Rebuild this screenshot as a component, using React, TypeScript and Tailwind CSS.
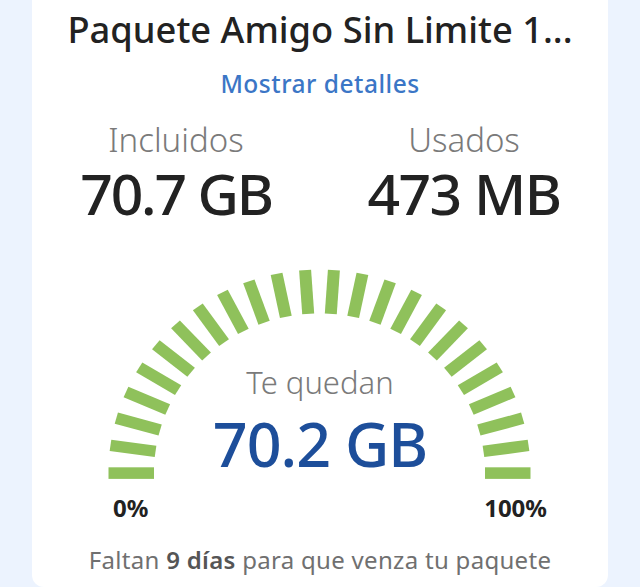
import React from "react";

const BARS = Array.from({ length: 24 }, (_, i) => (i * 180) / 23);

function Gauge() {
  return (
    <svg
      className="absolute inset-0 h-full w-full"
      viewBox="0 0 576 273.3"
      aria-hidden="true"
    >
      <g transform="translate(287.5 251.1) scale(1 0.9645)">
        {BARS.map((deg, i) => (
          <rect
            key={i}
            x={-211}
            y={-6}
            width={45.5}
            height={12}
            fill="#8fc15b"
            transform={`rotate(${deg})`}
          />
        ))}
      </g>
    </svg>
  );
}

export default function App() {
  return (
    <div
      className="flex min-h-screen justify-center bg-[#ecf3fe]"
      style={{ fontFamily: "'Noto Sans', 'Open Sans', sans-serif" }}
    >
      <div className="flex h-[587px] w-[576px] flex-col items-center rounded-b-[12px] bg-white">
        <div className="pt-[10.5px] text-[36.3px] font-medium leading-none text-[#222222]">
          Paquete Amigo Sin Limite 1...
        </div>
        <div className="mt-[25.5px] text-[24.5px] font-medium leading-none tracking-[0.5px] text-[#3b76c6]">
          Mostrar detalles
        </div>
        <div className="mt-[25.8px] grid w-full grid-cols-2">
          <div className="flex flex-col items-center">
            <div className="text-[33px] font-light leading-none text-[#7a7a7a]">
              Incluidos
            </div>
            <div className="mt-[9.7px] text-[57px] font-medium leading-none tracking-[-2.2px] text-[#222222]">
              70.7 GB
            </div>
          </div>
          <div className="flex flex-col items-center">
            <div className="text-[33px] font-light leading-none text-[#7a7a7a]">
              Usados
            </div>
            <div className="mt-[9.7px] text-[57px] font-medium leading-none tracking-[-1.5px] text-[#222222]">
              473 MB
            </div>
          </div>
        </div>
        <div className="relative flex h-[273.3px] w-full flex-col items-center pt-[145.1px]">
          <Gauge />
          <div className="relative text-[31px] font-light leading-none text-[#7a7a7a]">
            Te quedan
          </div>
          <div className="relative mt-[14.3px] text-[61px] font-medium leading-none tracking-[-1px] text-[#1d4e9a]">
            70.2 GB
          </div>
        </div>
        <div className="flex w-full justify-between pl-[81px] pr-[61px] text-[24px] font-bold leading-none text-[#222222]">
          <span>0%</span>
          <span>100%</span>
        </div>
        <div className="mt-[28px] text-[24px] font-normal leading-none tracking-[0.3px] text-[#707070]">
          Faltan <span className="font-semibold text-[#555555]">9 días</span> para
          que venza tu paquete
        </div>
      </div>
    </div>
  );
}
